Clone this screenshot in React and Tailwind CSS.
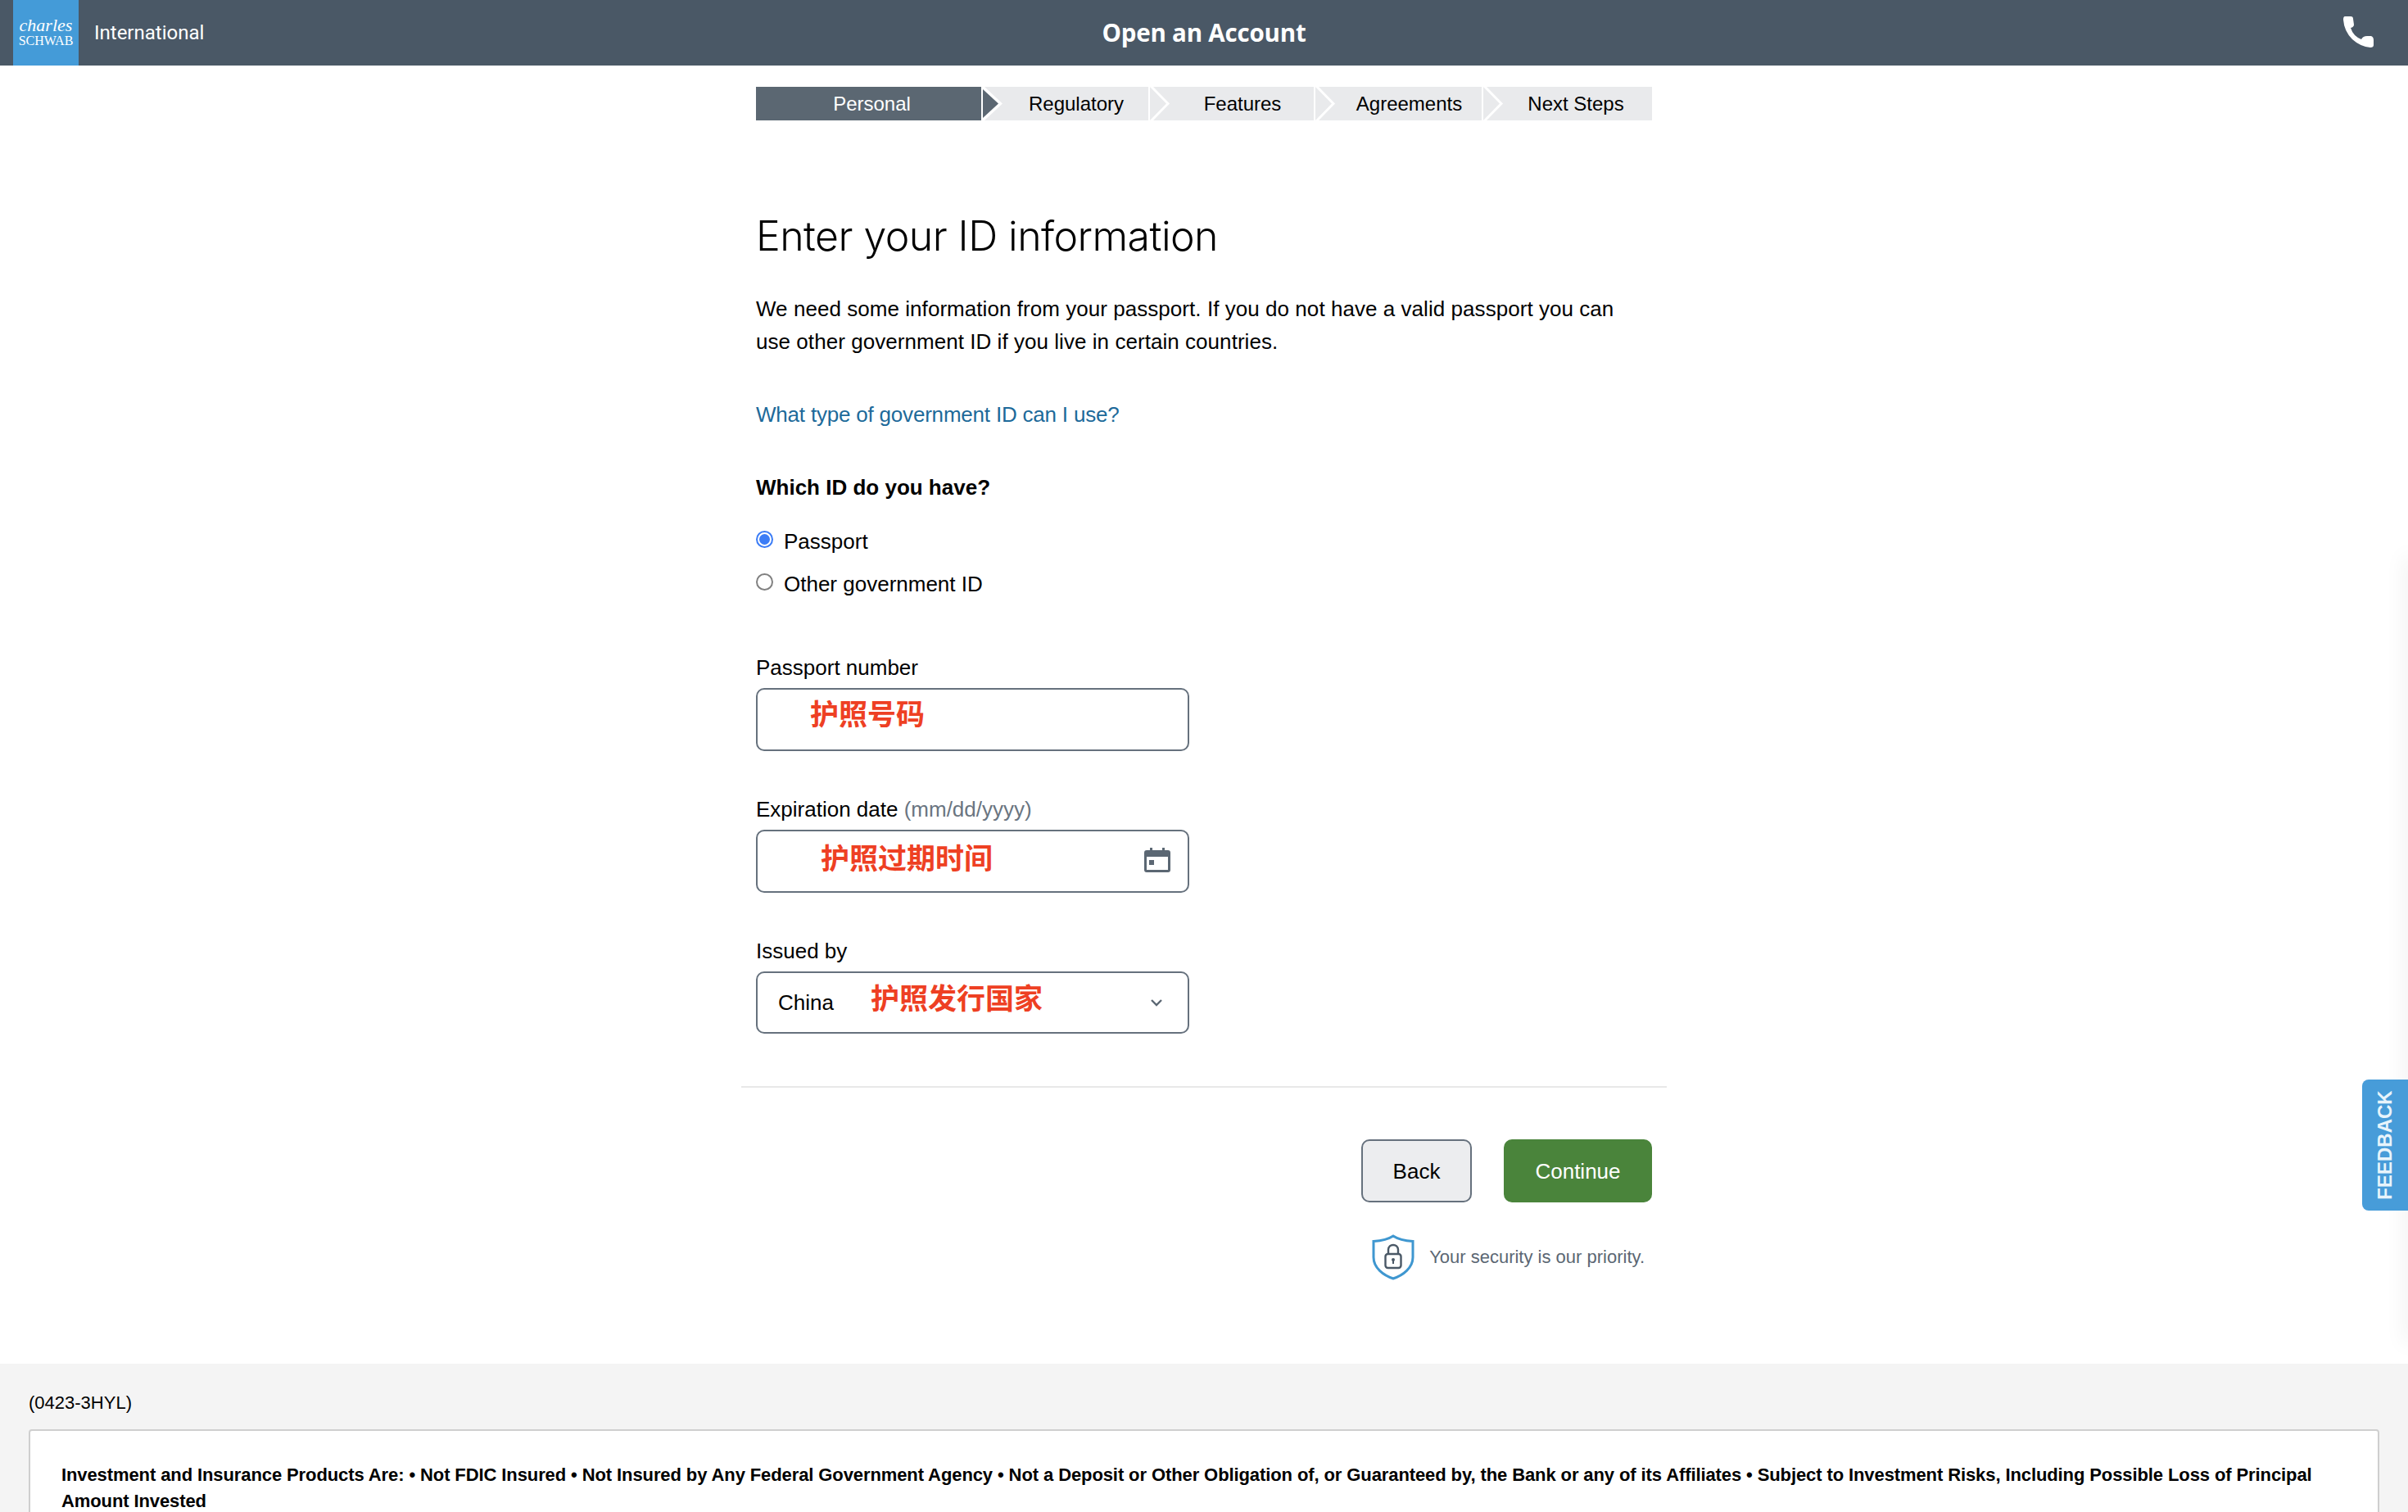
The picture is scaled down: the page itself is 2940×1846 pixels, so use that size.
import React from "react";

const STEPS = [
  { label: "Regulatory", width: "w-[204px]", pad: "pl-[28px]" },
  { label: "Features", width: "w-[202px]", pad: "pl-[28px]" },
  { label: "Agreements", width: "w-[205px]", pad: "pl-[28px]" },
  { label: "Next Steps", width: "w-[208px]", pad: "pl-[22px]" },
];

const CJK = "font-['Noto_Sans_CJK_SC','Noto_Sans',sans-serif]";

const Chevron = () => (
  <svg className="absolute left-0 top-0 h-[41px] w-[28px]" viewBox="0 0 28 41" fill="none">
    <rect x="0" y="0" width="2" height="41" fill="white" />
    <path d="M3 -1L24 20.5L3 42" stroke="white" strokeWidth="3" />
  </svg>
);

const PhoneIcon = () => (
  <svg className="h-[40px] w-[40px]" viewBox="0 0 40 40" fill="white">
    <path d="M3 1L10 1Q13 1 13 4L14 11Q14 14 10 15Q13 25 23 29Q25 25 30 25L35 25Q38 26 38 30L38 36Q38 39 34 39Q22 38 12 29Q2 19 1 5Q1 1 3 1Z" />
  </svg>
);

const CalendarIcon = () => (
  <svg className="h-[30px] w-[32px]" viewBox="0 0 32 30" fill="none">
    <path
      fillRule="evenodd"
      d="M7 0h3v3h12V0h3v3h4c2 0 3 1 3 3v21c0 2-1 3-3 3H3c-2 0-3-1-3-3V6c0-2 1-3 3-3h4V0ZM3 11v16h26V11H3Z"
      fill="#5b6773"
    />
    <rect x="6" y="15" width="6" height="6" fill="#5b6773" />
  </svg>
);

const ChevronDown = () => (
  <svg className="h-[10px] w-[16px]" viewBox="0 0 16 10" fill="none">
    <path d="M2 2L8 8L14 2" stroke="#5b6773" strokeWidth="2.4" />
  </svg>
);

const ShieldIcon = () => (
  <svg className="h-[56px] w-[52px]" viewBox="0 0 52 56" fill="none">
    <path
      d="M26 2C20 6 10 8 2 8.500V28C2 41 14 50 26 54C38 50 50 41 50 28V8.500C42 8 32 6 26 2Z"
      stroke="#3f97d0"
      strokeWidth="3"
    />
    <rect x="16.500" y="24" width="19" height="17" rx="3" stroke="#4a5866" strokeWidth="2.400" />
    <path d="M20 24V19C20 11 32 11 32 19V24" stroke="#4a5866" strokeWidth="2.400" />
    <circle cx="26" cy="31" r="2" fill="#4a5866" />
    <rect x="25" y="31" width="2" height="5" fill="#4a5866" />
  </svg>
);

const Radio = ({ checked, label }) => (
  <label className="flex h-[52px] items-center">
    <span
      className={`mt-[-5px] flex h-[21px] w-[21px] items-center justify-center rounded-full border-2 bg-white ${
        checked ? "border-[#3b7cf6]" : "border-[#808080]"
      }`}
    >
      {checked && <span className="h-[13px] w-[13px] rounded-full bg-[#3b7cf6]" />}
    </span>
    <span className="ml-[13px]">{label}</span>
  </label>
);

const Field = ({ children, className = "" }) => (
  <div className={`flex w-[529px] rounded-[10px] border-2 border-[#66717d] bg-white ${className}`}>{children}</div>
);

const App = () => {
  return (
    <div className="relative h-screen overflow-hidden bg-white font-['Liberation_Sans',Arial,sans-serif] text-[26px] leading-[40px] text-black">
      {/* Top bar */}
      <header className="relative flex h-[80px] items-center justify-center bg-[#4a5866] text-white">
        <div className="absolute left-[16px] top-0 flex h-[80px] w-[80px] flex-col items-center bg-[#449bd8] pt-[19px] font-['Liberation_Serif',serif]">
          <span className="text-[22px] italic leading-[24px]">charles</span>
          <span className="text-[16px] leading-[14px]">SCHWAB</span>
        </div>
        <span className="absolute left-[115px] font-['Roboto',sans-serif] text-[24px] leading-[40px]">International</span>
        <h1 className="font-['Open_Sans',sans-serif] text-[29.500px] font-bold tracking-[-0.2px]">Open an Account</h1>
        <div className="absolute right-[40px] top-[19px]">
          <PhoneIcon />
        </div>
      </header>

      <main className="mx-auto h-[1585px] w-[1094px]">
        {/* Steps */}
        <div className="mt-[26px] flex h-[41px] text-[24px] leading-[41px]">
          <div className="relative z-10 w-[275px] bg-[#5b6772] pl-[8px] text-center text-white">
            Personal
            <svg className="absolute left-full top-0 h-[41px] w-[28px]" viewBox="0 0 28 41">
              <rect x="0" y="0" width="28" height="41" fill="#e9eaec" />
              <path d="M0 -1H3L26 20.500L3 42H0Z" fill="white" />
              <path d="M2 3L21 20.500L2 38Z" fill="#5b6772" />
            </svg>
          </div>
          {STEPS.map((step, i) => (
            <div key={step.label} className={`relative bg-[#e9eaec] text-center ${step.pad} ${step.width}`}>
              {i > 0 && <Chevron />}
              {step.label}
            </div>
          ))}
        </div>

        <h2 className="mt-[106px] font-['Inter',sans-serif] text-[50px] font-light leading-[70px] tracking-[-0.55px]">Enter your ID information</h2>

        <p className="mt-[34px] tracking-[0.05px]">
          We need some information from your passport. If you do not have a valid passport you can
          <br />
          use other government ID if you live in certain countries.
        </p>

        <a className="mt-[49px] block tracking-[-0.2px] text-[#1d6a9a]">What type of government ID can I use?</a>

        <div className="mt-[49px] font-bold">Which ID do you have?</div>

        <div className="mt-[20px] flex flex-col">
          <Radio checked label="Passport" />
          <Radio label="Other government ID" />
        </div>

        <div className="mt-[56px]">Passport number</div>
        <Field className="mt-[5px] h-[77px] pl-[64px] pt-[6px]">
          <span className={`${CJK} text-[35px] font-bold leading-[44px] text-[#ee4023]`}>护照号码</span>
        </Field>

        <div className="mt-[51px]">
          Expiration date <span className="text-[#6a7581]">(mm/dd/yyyy)</span>
        </div>
        <Field className="mt-[5px] h-[77px] justify-between pl-[77px] pr-[21px] pt-[9px]">
          <span className={`${CJK} text-[35px] font-bold leading-[44px] text-[#ee4023]`}>护照过期时间</span>
          <span className="mt-[11px]">
            <CalendarIcon />
          </span>
        </Field>

        <div className="mt-[51px]">Issued by</div>
        <Field className="mt-[5px] h-[76px] items-center pl-[25px] pr-[30px]">
          <span>China</span>
          <span className={`${CJK} ml-[45px] mt-[-14px] text-[35px] font-bold leading-[44px] text-[#ee4023]`}>护照发行国家</span>
          <span className="ml-auto flex">
            <ChevronDown />
          </span>
        </Field>

        <hr className="mx-[-18px] mt-[64px] border-t-2 border-[#e8e8e8]" />

        {/* Actions */}
        <div className="mt-[63px] flex justify-end gap-[39px]">
          <button className="h-[77px] w-[135px] rounded-[10px] border-2 border-[#66717d] bg-[#ecedef]">Back</button>
          <button className="h-[77px] w-[181px] rounded-[10px] bg-[#4a843b] text-white">Continue</button>
        </div>

        <div className="mt-[39px] flex items-center justify-end pr-[9px]">
          <ShieldIcon />
          <span className="ml-[18px] text-[22px] text-[#5b6773]">Your security is our priority.</span>
        </div>
      </main>

      {/* Footer */}
      <footer className="absolute inset-x-0 top-[1665px] h-[300px] bg-[#f4f4f4] px-[35px] pt-[28px] text-[22px]">
        <div className="leading-[40px]">(0423-3HYL)</div>
        <div className="mt-[12px] h-[300px] rounded-[4px] border-2 border-[#cfcfcf] bg-white px-[38px] pt-[38px] text-[22px] font-bold leading-[32px] tracking-[-0.1px]">
          Investment and Insurance Products Are: • Not FDIC Insured • Not Insured by Any Federal Government Agency • Not a Deposit or Other Obligation of, or Guaranteed by, the Bank or any of its Affiliates • Subject to Investment Risks, Including Possible Loss of Principal Amount Invested
        </div>
      </footer>

      {/* Feedback tab + side panel shadow */}
      <div className="absolute right-[-4px] top-[680px] h-[960px] w-[4px] shadow-[0_0_24px_rgba(0,0,0,0.22)]" />
      <div className="absolute right-0 top-[1318px] flex h-[160px] w-[56px] items-center justify-center rounded-l-[8px] bg-[#479cd9]">
        <span className="-rotate-90 whitespace-nowrap text-[24px] font-bold leading-none text-[#e8f4fb]">FEEDBACK</span>
      </div>
    </div>
  );
};

export default App;
